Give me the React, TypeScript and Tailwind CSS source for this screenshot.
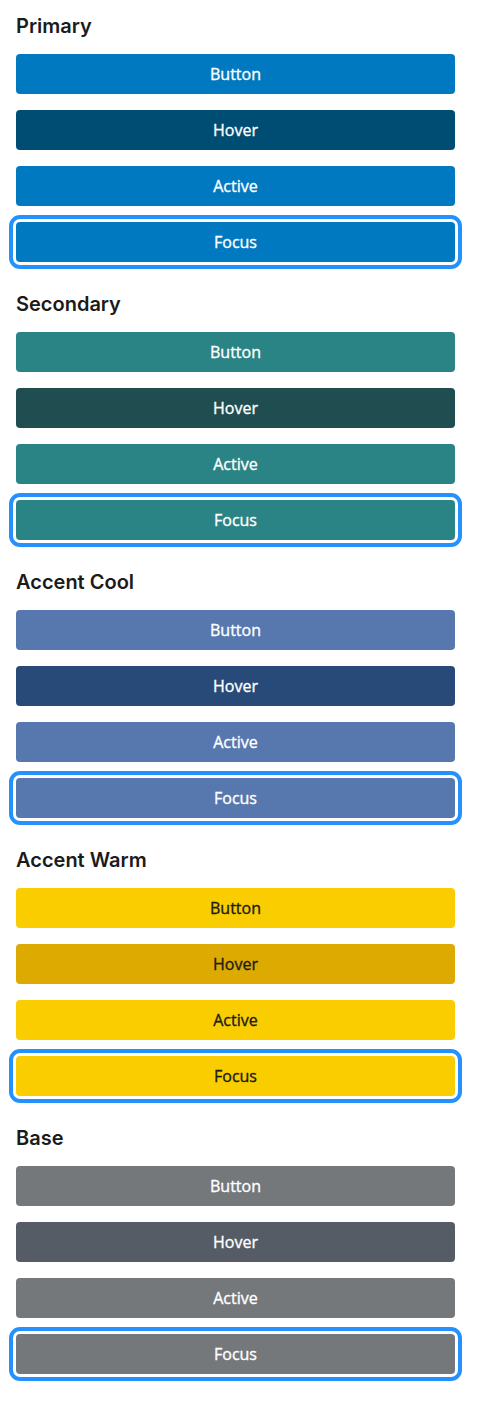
const groups = [
  { title: "Primary", base: "bg-[#0079c1]", hover: "bg-[#004d73]", text: "text-white" },
  { title: "Secondary", base: "bg-[#2a8384]", hover: "bg-[#204e50]", text: "text-white" },
  { title: "Accent Cool", base: "bg-[#5678ae]", hover: "bg-[#284a78]", text: "text-white" },
  { title: "Accent Warm", base: "bg-[#f9cd00]", hover: "bg-[#dcaa00]", text: "text-[#1b1b1b]" },
  { title: "Base", base: "bg-[#75787b]", hover: "bg-[#565c65]", text: "text-white" },
];

function Btn({ label, bg, text, focus }: { label: string; bg: string; text: string; focus?: boolean }) {
  return (
    <button
      className={`h-10 w-full rounded-[4px] ${bg} ${text} text-[16px] font-normal [-webkit-text-stroke:0.35px_currentColor] font-['Open_Sans',sans-serif] ${
        focus ? "outline-[4px] outline-solid outline-[#2491ff] outline-offset-[3px]" : ""
      }`}
    >
      {label}
    </button>
  );
}

export default function App() {
  return (
    <div className="min-h-[1423px] bg-white px-4 pt-[12px]">
      <div className="w-[439px]">
        {groups.map((g) => (
          <section key={g.title} className="mb-[28px]">
            <h2 className="h-[28px] text-[20px] leading-[28px] font-semibold text-[#1b1b1b] font-['Inter',sans-serif]">{g.title}</h2>
            <div className="mt-[14px] flex flex-col gap-4">
              <Btn label="Button" bg={g.base} text={g.text} />
              <Btn label="Hover" bg={g.hover} text={g.text} />
              <Btn label="Active" bg={g.base} text={g.text} />
              <Btn label="Focus" bg={g.base} text={g.text} focus />
            </div>
          </section>
        ))}
      </div>
    </div>
  );
}
